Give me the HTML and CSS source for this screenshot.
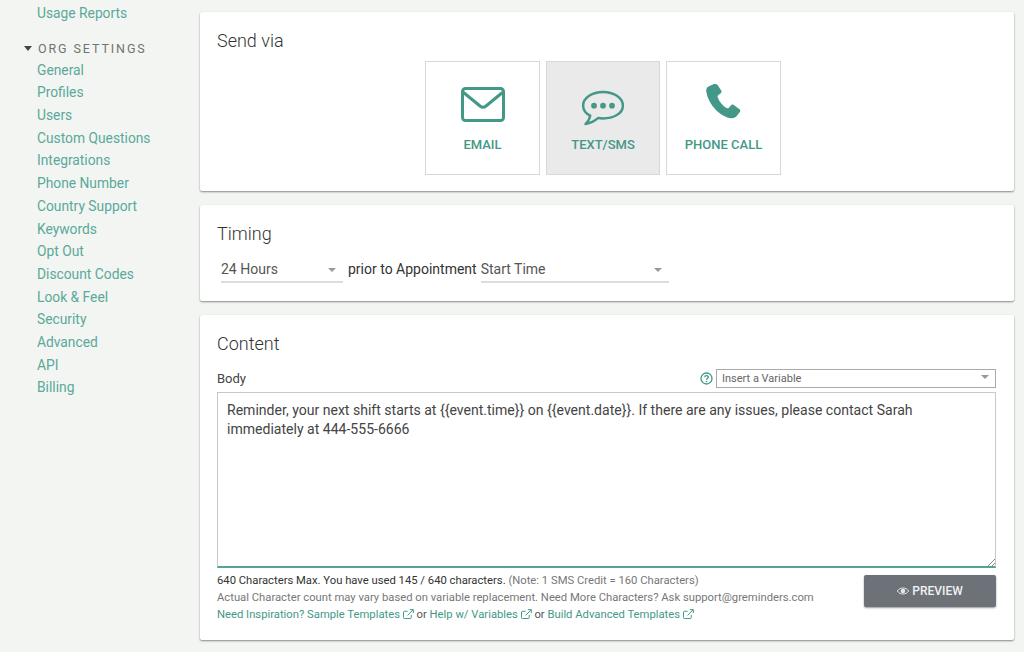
FILE: index.html
```html
<!DOCTYPE html>
<html>
<head>
    <title>Reminder Settings</title>
    <link rel="stylesheet" href="styles.css">
</head>
<body>
    <div class="page">
        <nav class="sidebar">
            <a class="nav-link nav-top" href="#">Usage Reports</a>
            <div class="nav-heading"><span class="caret"></span>ORG SETTINGS</div>
            <a class="nav-link" href="#">General</a>
            <a class="nav-link" href="#">Profiles</a>
            <a class="nav-link" href="#">Users</a>
            <a class="nav-link" href="#">Custom Questions</a>
            <a class="nav-link" href="#">Integrations</a>
            <a class="nav-link" href="#">Phone Number</a>
            <a class="nav-link" href="#">Country Support</a>
            <a class="nav-link" href="#">Keywords</a>
            <a class="nav-link" href="#">Opt Out</a>
            <a class="nav-link" href="#">Discount Codes</a>
            <a class="nav-link" href="#">Look &amp; Feel</a>
            <a class="nav-link" href="#">Security</a>
            <a class="nav-link" href="#">Advanced</a>
            <a class="nav-link" href="#">API</a>
            <a class="nav-link" href="#">Billing</a>
        </nav>

        <main class="main">
            <section class="card card-send">
                <h2>Send via</h2>
                <div class="channels">
                    <div class="channel">
                        <svg class="icon-email" width="44" height="35" viewBox="0 0 44 35">
                            <rect x="1.5" y="1.5" width="41" height="32" rx="3" fill="none" stroke="#439887" stroke-width="3"/>
                            <path d="M2.5 5.5 L19 19 Q22 21.5 25 19 L41.5 5.5" fill="none" stroke="#439887" stroke-width="3"/>
                        </svg>
                        <span>EMAIL</span>
                    </div>
                    <div class="channel channel-active">
                        <svg class="icon-sms" width="44" height="36" viewBox="0 0 46 38">
                            <path d="M23 2 C34 2 44 8 44 16.5 C44 25 34 30 23 30 C21 30 19.5 30 18 29.5 C14 33 10 35 4.5 36 C7.5 33 9 30 9.5 27 C4.5 24.5 2 21 2 16.5 C2 8 12 2 23 2 Z" fill="none" stroke="#439887" stroke-width="2.6" stroke-linejoin="round"/>
                            <circle cx="13.5" cy="16.5" r="3" fill="#439887"/>
                            <circle cx="23" cy="16.5" r="3" fill="#439887"/>
                            <circle cx="32.5" cy="16.5" r="3" fill="#439887"/>
                        </svg>
                        <span>TEXT/SMS</span>
                    </div>
                    <div class="channel">
                        <svg class="icon-phone" width="35" height="35" viewBox="0 0 36 36">
                            <path d="M7 0.5 L2.5 2.5 C0.5 3.5 0 5.5 0.3 8 C1.5 15 5 21 9.5 26 C14 31 20 34.5 26 35.3 C28.5 35.5 30.5 34.5 32 32.5 L35 28.5 C35.5 27.5 35.3 26.5 34.5 26 L28.5 21.5 C27.5 21 26.5 21 25.8 21.8 L23.5 24.5 C22.8 25.2 22 25.2 21 24.7 C17 22 13.5 18 12 13.5 C11.7 12.5 12 11.7 12.8 11.2 L15.2 9.5 C16 9 16.2 8 15.8 7 L12 1 C11 0 9 -0.3 7 0.5 Z" fill="#439887"/>
                        </svg>
                        <span>PHONE CALL</span>
                    </div>
                </div>
            </section>

            <section class="card card-timing">
                <h2>Timing</h2>
                <div class="timing-row">
                    <div class="select select-hours">24 Hours<span class="select-arrow"></span></div>
                    <span class="prior">prior to Appointment</span>
                    <div class="select select-start">Start Time<span class="select-arrow"></span></div>
                </div>
            </section>

            <section class="card card-content">
                <h2>Content</h2>
                <div class="body-row">
                    <label>Body</label>
                    <div class="variable-wrap">
                        <svg class="help-icon" width="13" height="13" viewBox="0 0 13 13">
                            <circle cx="6.5" cy="6.5" r="5.5" fill="none" stroke="#439887" stroke-width="1.3"/>
                            <path d="M4.7 5.2 C4.7 3 8.3 3 8.3 5.1 C8.3 6.4 6.5 6.3 6.5 7.7" fill="none" stroke="#439887" stroke-width="1.3"/>
                            <circle cx="6.5" cy="9.5" r="0.8" fill="#439887"/>
                        </svg>
                        <div class="variable-select">Insert a Variable<span class="select-arrow"></span></div>
                    </div>
                </div>
                <div class="textarea">
                    Reminder, your next shift starts at {{event.time}} on {{event.date}}. If there are any issues, please contact Sarah immediately at 444-555-6666
                    <svg class="resize-grip" width="8" height="8" viewBox="0 0 8 8">
                        <path d="M8 1 L1 8 M8 5 L5 8" stroke="#888" stroke-width="1"/>
                    </svg>
                </div>
                <div class="footer-row">
                    <div class="notes">
                        <div><span class="dark">640 Characters Max. You have used 145 / 640 characters.</span> (Note: 1 SMS Credit = 160 Characters)</div>
                        <div>Actual Character count may vary based on variable replacement. Need More Characters? Ask support@greminders.com</div>
                        <div class="links">
                            <a href="#">Need Inspiration? Sample Templates</a>
                            <svg class="ext" width="11" height="10" viewBox="0 0 12 11"><path d="M9 6.5 V9.5 Q9 10.5 8 10.5 H1.5 Q0.5 10.5 0.5 9.5 V3.5 Q0.5 2.5 1.5 2.5 H5 M5 7 L11 1 M7.5 0.7 H11.3 V4.5" fill="none" stroke="#439887" stroke-width="1.1"/></svg>
                            or <a href="#">Help w/ Variables</a>
                            <svg class="ext" width="11" height="10" viewBox="0 0 12 11"><path d="M9 6.5 V9.5 Q9 10.5 8 10.5 H1.5 Q0.5 10.5 0.5 9.5 V3.5 Q0.5 2.5 1.5 2.5 H5 M5 7 L11 1 M7.5 0.7 H11.3 V4.5" fill="none" stroke="#439887" stroke-width="1.1"/></svg>
                            or <a href="#">Build Advanced Templates</a>
                            <svg class="ext" width="11" height="10" viewBox="0 0 12 11"><path d="M9 6.5 V9.5 Q9 10.5 8 10.5 H1.5 Q0.5 10.5 0.5 9.5 V3.5 Q0.5 2.5 1.5 2.5 H5 M5 7 L11 1 M7.5 0.7 H11.3 V4.5" fill="none" stroke="#439887" stroke-width="1.1"/></svg>
                        </div>
                    </div>
                    <button class="preview">
                        <svg width="12" height="8" viewBox="0 0 12 8"><path d="M0.3 4 C3 0 9 0 11.7 4 C9 8 3 8 0.3 4 Z" fill="none" stroke="#e4e6e8" stroke-width="1"/><circle cx="6" cy="4" r="2.3" fill="#e4e6e8"/></svg>
                        PREVIEW
                    </button>
                </div>
            </section>
        </main>
    </div>
</body>
</html>
```

FILE: styles.css
```css
html, body {
    margin: 0;
    height: 652px;
    overflow: hidden;
}
body {
    font-family: Roboto, "Liberation Sans", sans-serif;
    background: #f3f5f3;
    color: #444;
}
.page {
    display: flex;
    height: 652px;
    overflow: hidden;
}
.sidebar {
    width: 200px;
    flex-shrink: 0;
    padding-left: 37px;
    box-sizing: border-box;
}
.nav-link {
    display: block;
    height: 22.7px;
    line-height: 22.7px;
    font-size: 13.8px;
    color: #5aa999;
    text-decoration: none;
}
.nav-top {
    margin-top: 2px;
}
.nav-heading {
    position: relative;
    margin-top: 13px;
    height: 21px;
    line-height: 21px;
    font-size: 12.5px;
    letter-spacing: 1.9px;
    padding-left: 1px;
    color: #6f7472;
}
.caret {
    position: absolute;
    left: -13px;
    top: 8px;
    border-left: 4.5px solid transparent;
    border-right: 4.5px solid transparent;
    border-top: 5px solid #444;
}
.main {
    width: 814px;
    padding-top: 12px;
    display: flex;
    flex-direction: column;
    gap: 14px;
}
.card {
    flex-shrink: 0;
    background: #fff;
    box-shadow: 0 1px 2px rgba(0,0,0,0.45);
    border-radius: 2px;
    padding: 0 18px 0 17px;
    box-sizing: border-box;
}
h2 {
    margin: 0;
    font-size: 18px;
    font-weight: 300;
    line-height: 22px;
    color: #333;
}
.card-send {
    height: 179px;
    padding-top: 18px;
}
.channels {
    display: flex;
    justify-content: center;
    gap: 6px;
    margin-top: 9px;
    padding-right: 7px;
}
.channel {
    width: 114.5px;
    height: 114px;
    box-sizing: border-box;
    border: 1px solid #d8d8d8;
    display: flex;
    flex-direction: column;
    align-items: center;
    color: #439887;
    font-size: 13px;
    font-weight: 500;
}
.channel-active {
    background: #eaeaea;
}
.icon-email {
    margin: 25px 0 15px;
}
.icon-sms {
    margin: 28px 0 11px;
}
.icon-phone {
    margin: 22px 0 18px;
}
.card-timing {
    height: 96px;
    padding-top: 18px;
}
.timing-row {
    display: flex;
    align-items: flex-start;
    margin-top: 10px;
    font-size: 14px;
    padding-left: 4px;
}
.select {
    position: relative;
    box-sizing: border-box;
    height: 28px;
    line-height: 28px;
    color: #555;
    border-bottom: 2px solid #ddd;
}
.select-hours {
    width: 122px;
}
.select-start {
    width: 188px;
}
.prior {
    line-height: 28px;
    margin: 0 4px 0 5px;
    color: #333;
}
.select-arrow {
    position: absolute;
    right: 7px;
    top: 13px;
    border-left: 4px solid transparent;
    border-right: 4px solid transparent;
    border-top: 4px solid #999;
}
.card-content {
    height: 325px;
    padding-top: 18px;
}
.body-row {
    display: flex;
    justify-content: space-between;
    align-items: center;
    margin-top: 12px;
    height: 22px;
}
.body-row label {
    font-size: 13px;
    padding-top: 1px;
    color: #444;
}
.variable-wrap {
    display: flex;
    align-items: center;
    gap: 3px;
}
.variable-select {
    position: relative;
    box-sizing: border-box;
    width: 280px;
    height: 19px;
    border: 1px solid #aaa;
    line-height: 18px;
    font-size: 11px;
    color: #666;
    padding-left: 5px;
}
.variable-select .select-arrow {
    top: 5px;
    right: 6px;
}
.textarea {
    position: relative;
    box-sizing: border-box;
    height: 176px;
    margin-top: 3px;
    padding: 8px 9px;
    border: 1px solid #c8c8c8;
    border-bottom: 2px solid #55a595;
    font-size: 14.06px;
    line-height: 19px;
    color: #444;
}
.resize-grip {
    position: absolute;
    right: 0;
    bottom: 0;
}
.footer-row {
    display: flex;
    justify-content: space-between;
    align-items: flex-start;
    margin-top: 4px;
}
.notes {
    font-size: 11.25px;
    line-height: 17px;
    color: #777;
}
.dark {
    color: #333;
}
.links {
    color: #555;
}
.links a {
    color: #439887;
    text-decoration: none;
}
.ext {
    vertical-align: -1px;
}
.preview {
    width: 132px;
    height: 32px;
    margin-top: 3px;
    background: #6c7278;
    color: #f0f1f2;
    border: none;
    border-radius: 2px;
    box-shadow: 0 1px 2px rgba(0,0,0,0.4);
    font-family: inherit;
    font-size: 12px;
    font-weight: 500;
}
```
